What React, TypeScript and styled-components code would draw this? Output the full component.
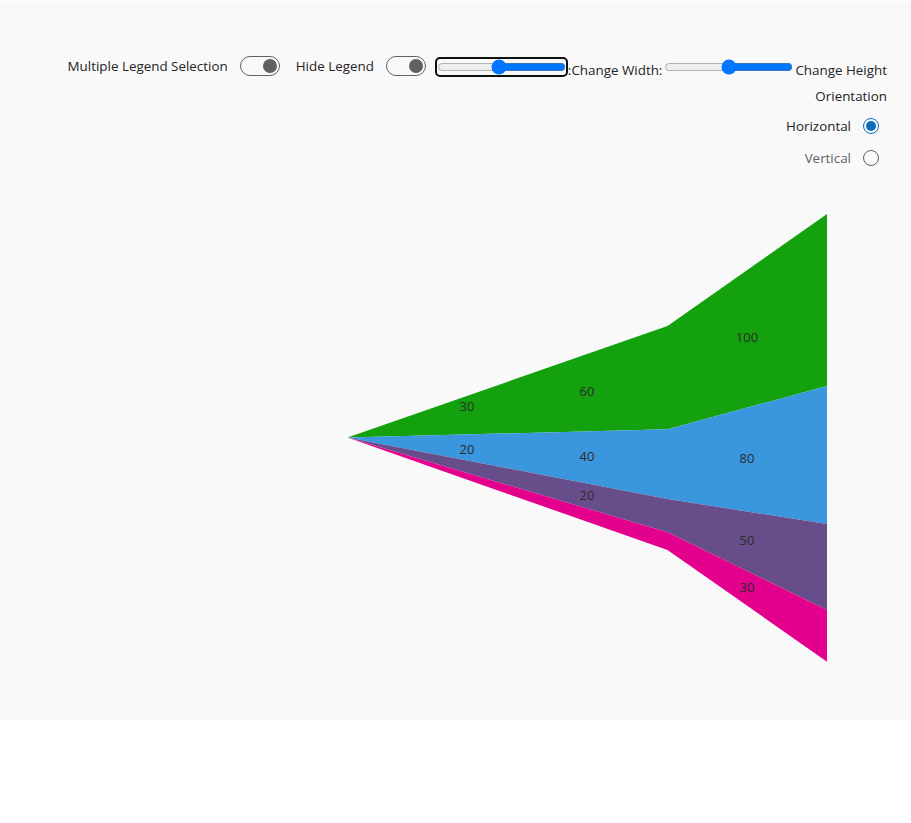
import React from "react";
import styled, { createGlobalStyle } from "styled-components";

const Global = createGlobalStyle`
  html, body { margin: 0; padding: 0; background: #ffffff; }
  body { font-family: "Segoe UI", "Open Sans", sans-serif; }
`;

const Page = styled.div`
  padding-top: 1px;
`;

const Panel = styled.div`
  background: #f9f9f9;
  height: 719px;
  display: flex;
  flex-direction: column;
`;

const Controls = styled.div`
  display: flex;
  flex-direction: column;
  align-items: flex-end;
  padding: 50px 24px 0 0;
`;

const TopRow = styled.div`
  display: flex;
  align-items: center;
`;

const ToggleField = styled.label<{ $after: number }>`
  display: inline-flex;
  align-items: center;
  gap: 12px;
  margin-right: ${(p) => p.$after}px;
  font-size: 13.4px;
  color: #242424;
`;

const ToggleTrack = styled.span`
  box-sizing: border-box;
  width: 40px;
  height: 20px;
  border: 1px solid #616161;
  border-radius: 10px;
  display: flex;
  align-items: center;
  justify-content: flex-end;
  padding: 0 2px;
`;

const ToggleThumb = styled.span`
  width: 14px;
  height: 14px;
  border-radius: 50%;
  background: #616161;
`;

const SliderLine = styled.div`
  font-size: 13.4px;
  color: #242424;
  line-height: 20px;
  padding-top: 6px;
`;

const Range = styled.input<{ $focused?: boolean }>`
  width: 129px;
  margin: 2px;
  vertical-align: baseline;
  direction: rtl;
  accent-color: #0075ff;
  outline: ${(p) => (p.$focused ? "2px solid #101010" : "none")};
  outline-offset: 0px;
  border-radius: 3px;
`;

const Orientation = styled.div`
  display: flex;
  flex-direction: column;
  align-items: flex-end;
  margin-top: 6px;
`;

const GroupLabel = styled.div`
  font-size: 13.4px;
  color: #242424;
  line-height: 20px;
  margin-bottom: 4px;
`;

const Option = styled.label<{ $checked?: boolean }>`
  display: flex;
  align-items: center;
  gap: 12px;
  height: 32px;
  padding-right: 8px;
  font-size: 13.4px;
  color: ${(p) => (p.$checked ? "#242424" : "#616161")};
`;

const RadioCircle = styled.span<{ $checked?: boolean }>`
  box-sizing: border-box;
  width: 16px;
  height: 16px;
  border-radius: 50%;
  border: 1px solid ${(p) => (p.$checked ? "#0f6cbd" : "#616161")};
  display: flex;
  align-items: center;
  justify-content: center;
  &::after {
    content: "";
    width: 10px;
    height: 10px;
    border-radius: 50%;
    background: ${(p) => (p.$checked ? "#0f6cbd" : "transparent")};
  }
`;

const ChartArea = styled.div`
  flex: 1;
`;

const ChartSvg = styled.svg`
  display: block;
`;

const ValueLabel = styled.text`
  font-family: "Segoe UI", "Open Sans", sans-serif;
  font-size: 13px;
  fill: #2b2b2b;
`;

// chart geometry (y relative to svg top which sits at page y=174)
const OY = 174;
const apex = { x: 347.5, y: 437.5 - OY };
const xs = [667.5, 827];
const bands = [
  { color: "#13a10e", top: [326, 214], bottom: [429.3, 386] },
  { color: "#3a96dd", top: [429.3, 386], bottom: [499, 524] },
  { color: "#674e8b", top: [499, 524], bottom: [532.3, 610] },
  { color: "#e3008c", top: [532.3, 610], bottom: [550, 661.7] },
];
const labels = [
  { x: 467, y: 406, t: "30" },
  { x: 587, y: 391, t: "60" },
  { x: 747, y: 337, t: "100" },
  { x: 467, y: 449, t: "20" },
  { x: 587, y: 456, t: "40" },
  { x: 747, y: 458, t: "80" },
  { x: 587, y: 495, t: "20" },
  { x: 747, y: 540, t: "50" },
  { x: 747, y: 587, t: "30" },
];

function bandPoints(b: { top: number[]; bottom: number[] }) {
  const pts = [
    `${apex.x},${apex.y}`,
    `${xs[0]},${b.top[0] - OY}`,
    `${xs[1]},${b.top[1] - OY}`,
    `${xs[1]},${b.bottom[1] - OY}`,
    `${xs[0]},${b.bottom[0] - OY}`,
  ];
  return pts.join(" ");
}

function Toggle({ label, after }: { label: string; after: number }) {
  return (
    <ToggleField $after={after}>
      {label}
      <ToggleTrack>
        <ToggleThumb />
      </ToggleTrack>
    </ToggleField>
  );
}

export default function App() {
  return (
    <Page>
      <Global />
      <Panel>
        <Controls>
          <TopRow>
            <Toggle label="Multiple Legend Selection" after={16} />
            <Toggle label="Hide Legend" after={9} />
            <SliderLine>
              <Range type="range" min={0} max={100} defaultValue={52} $focused />
              :Change Width:
              <Range type="range" min={0} max={100} defaultValue={50} />
              Change Height
            </SliderLine>
          </TopRow>
          <Orientation>
            <GroupLabel>Orientation</GroupLabel>
            <Option $checked>
              Horizontal
              <RadioCircle $checked />
            </Option>
            <Option>
              Vertical
              <RadioCircle />
            </Option>
          </Orientation>
        </Controls>
        <ChartArea>
          <ChartSvg width={911} height={540} viewBox="0 0 911 540">
            {bands.map((b, i) => (
              <polygon key={i} points={bandPoints(b)} fill={b.color} />
            ))}
            {labels.map((l, i) => (
              <ValueLabel key={i} x={l.x} y={l.y - OY} textAnchor="middle" dominantBaseline="central">
                {l.t}
              </ValueLabel>
            ))}
          </ChartSvg>
        </ChartArea>
      </Panel>
    </Page>
  );
}
